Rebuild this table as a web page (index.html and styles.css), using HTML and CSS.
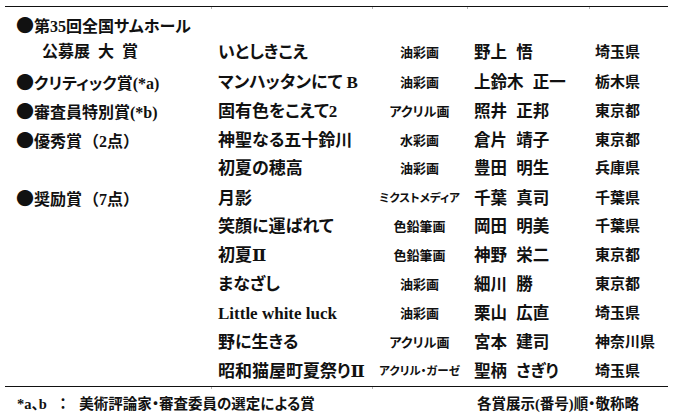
FILE: index.html
```html
<!DOCTYPE html>
<html lang="ja">
<head>
<meta charset="utf-8">
<title>第35回全国サムホール公募展 入賞者</title>
<link rel="stylesheet" href="styles.css">
</head>
<body>
<div class="sheet">
  <div class="rule rule-top"><span></span><span class="tick"></span><span class="tick"></span><span class="tick"></span><span class="tick"></span></div>
  <div class="list">
    <div class="row first">
      <div class="award">
        <div class="award-line"><span class="dot">●</span>第35回全国サムホール</div>
        <div class="award-line sub">公募展 大 賞</div>
      </div>
      <div class="title">いとしきこえ</div>
      <div class="medium">油彩画</div>
      <div class="name">野上 悟</div>
      <div class="pref">埼玉県</div>
    </div>
    <div class="row">
      <div class="award"><span class="dot">●</span>クリティック賞(*a)</div>
      <div class="title">マンハッタンにて B</div>
      <div class="medium">油彩画</div>
      <div class="name">上鈴木 正一</div>
      <div class="pref">栃木県</div>
    </div>
    <div class="row">
      <div class="award"><span class="dot">●</span>審査員特別賞(*b)</div>
      <div class="title">固有色をこえて2</div>
      <div class="medium">アクリル画</div>
      <div class="name">照井 正邦</div>
      <div class="pref">東京都</div>
    </div>
    <div class="row">
      <div class="award"><span class="dot">●</span>優秀賞<span class="paren">（2点）</span></div>
      <div class="title">神聖なる五十鈴川</div>
      <div class="medium">水彩画</div>
      <div class="name">倉片 靖子</div>
      <div class="pref">東京都</div>
    </div>
    <div class="row">
      <div class="award"></div>
      <div class="title">初夏の穂高</div>
      <div class="medium">油彩画</div>
      <div class="name">豊田 明生</div>
      <div class="pref">兵庫県</div>
    </div>
    <div class="row">
      <div class="award"><span class="dot">●</span>奨励賞<span class="paren">（7点）</span></div>
      <div class="title">月影</div>
      <div class="medium small">ミクストメディア</div>
      <div class="name">千葉 真司</div>
      <div class="pref">千葉県</div>
    </div>
    <div class="row">
      <div class="award"></div>
      <div class="title">笑顔に運ばれて</div>
      <div class="medium">色鉛筆画</div>
      <div class="name">岡田 明美</div>
      <div class="pref">千葉県</div>
    </div>
    <div class="row">
      <div class="award"></div>
      <div class="title">初夏Ⅱ</div>
      <div class="medium">色鉛筆画</div>
      <div class="name">神野 栄二</div>
      <div class="pref">東京都</div>
    </div>
    <div class="row">
      <div class="award"></div>
      <div class="title">まなざし</div>
      <div class="medium">油彩画</div>
      <div class="name">細川 勝</div>
      <div class="pref">東京都</div>
    </div>
    <div class="row">
      <div class="award"></div>
      <div class="title">Little white luck</div>
      <div class="medium">油彩画</div>
      <div class="name">栗山 広直</div>
      <div class="pref">埼玉県</div>
    </div>
    <div class="row">
      <div class="award"></div>
      <div class="title">野に生きる</div>
      <div class="medium">アクリル画</div>
      <div class="name">宮本 建司</div>
      <div class="pref">神奈川県</div>
    </div>
    <div class="row">
      <div class="award"></div>
      <div class="title">昭和猫屋町夏祭りⅡ</div>
      <div class="medium small">アクリル・ガーゼ</div>
      <div class="name">聖柄 さぎり</div>
      <div class="pref">埼玉県</div>
    </div>
  </div>
  <div class="rule rule-bottom"><span></span><span class="tick"></span><span class="tick"></span><span></span><span></span></div>
  <div class="foot">
    <div class="note">*a、b ： 美術評論家・審査委員の選定による賞</div>
    <div class="order">各賞展示(番号)順・敬称略</div>
  </div>
</div>
</body>
</html>
```

FILE: styles.css
```css
html, body {
  margin: 0;
  padding: 0;
  background: #ffffff;
}

body {
  font-family: "Liberation Serif", "DejaVu Serif", "Noto Sans CJK JP", serif;
  color: #111111;
  font-weight: 700;
  font-feature-settings: "palt" 1;
}

.sheet {
  width: 663px;
  margin-left: 5px;
  padding-top: 6px;
}

.rule,
.row,
.foot {
  display: grid;
  grid-template-columns: 206px 161px 95px 122px 79px;
}

.rule {
  height: 2px;
  border-top: 1px solid #111111;
}

.rule .tick {
  border-left: 1px solid #b5b5b5;
}

.row {
  height: 29px;
  line-height: 29px;
  align-items: center;
  white-space: nowrap;
}

.row.first {
  height: 58px;
  align-items: end;
}

.award {
  padding-left: 12px;
  font-size: 16px;
}

.first .award {
  line-height: 25px;
  padding-bottom: 3px;
}

.award-line.sub {
  padding-left: 25px;
  word-spacing: 4px;
}

.dot {
  display: inline-block;
  width: 17px;
  font-family: "Noto Sans CJK JP", sans-serif;
  font-size: 18px;
  text-indent: -1px;
}

.paren {
  font-feature-settings: normal;
  margin-left: 1px;
}

.title {
  padding-left: 7px;
  font-size: 17px;
}

.medium {
  text-align: center;
  font-size: 13px;
}

.medium.small {
  font-size: 11.5px;
}

.name {
  padding-left: 7px;
  font-size: 16.5px;
  word-spacing: 5px;
}

.pref {
  padding-left: 6px;
  font-size: 15px;
}

.foot {
  padding-top: 2px;
  line-height: 26px;
  font-size: 14.5px;
  white-space: nowrap;
}

.note {
  grid-column: 1 / 4;
  padding-left: 12px;
  word-spacing: 9px;
}

.order {
  grid-column: 4 / 6;
  padding-left: 10px;
}
```
